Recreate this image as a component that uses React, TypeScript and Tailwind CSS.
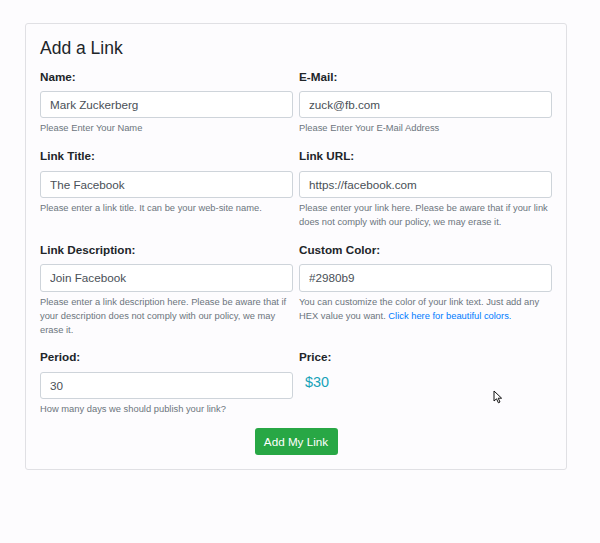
import React from "react";

type Field = {
  label: string;
  value: string;
  help: React.ReactNode;
};

const rows: Field[][] = [
  [
    { label: "Name:", value: "Mark Zuckerberg", help: "Please Enter Your Name" },
    { label: "E-Mail:", value: "zuck@fb.com", help: "Please Enter Your E-Mail Address" },
  ],
  [
    {
      label: "Link Title:",
      value: "The Facebook",
      help: "Please enter a link title. It can be your web-site name.",
    },
    {
      label: "Link URL:",
      value: "https://facebook.com",
      help: "Please enter your link here. Please be aware that if your link does not comply with our policy, we may erase it.",
    },
  ],
  [
    {
      label: "Link Description:",
      value: "Join Facebook",
      help: "Please enter a link description here. Please be aware that if your description does not comply with our policy, we may erase it.",
    },
    {
      label: "Custom Color:",
      value: "#2980b9",
      help: (
        <>
          You can customize the color of your link text. Just add any HEX value you want.{" "}
          <a href="#" className="text-[#007bff]">
            Click here for beautiful colors.
          </a>
        </>
      ),
    },
  ],
];

function FormGroup({ field }: { field: Field }) {
  return (
    <div className="flex flex-col mb-[11.7px]">
      <label className="text-[11.7px] leading-[17px] font-bold text-[#212529] mb-[6.6px]">
        {field.label}
      </label>
      <input
        readOnly
        value={field.value}
        className="h-[27.3px] w-full px-[9px] text-[11.7px] text-[#495057] bg-white border border-[#ced4da] rounded-[3px] outline-none"
      />
      <p className="mt-[3px] text-[9.35px] leading-[14px] text-[#6c757d]">{field.help}</p>
    </div>
  );
}

// little mouse pointer hovering over the form
function Pointer() {
  return (
    <svg
      className="absolute left-[493px] top-[390px]"
      width="10"
      height="14"
      viewBox="0 0 10 14"
    >
      <path
        d="M1 1 L1 11 L3.5 8.8 L5.4 12.8 L7 12 L5.2 8.2 L8.6 8.2 Z"
        fill="#fff"
        stroke="#111"
        strokeWidth="1"
        strokeLinejoin="round"
      />
    </svg>
  );
}

export default function App() {
  return (
    <div
      className="relative min-h-[543px] w-full bg-[#fdfcfe] pt-[23px] px-[25px]"
      style={{ fontFamily: '"Liberation Sans", Arial, sans-serif' }}
    >
      <div className="w-[542px] h-[447px] border border-[#e0e0e4] rounded-[3px] pt-[14px] px-[14px]">
        <h4 className="text-[17.5px] leading-[21px] text-[#212529] mb-[8.5px]">Add a Link</h4>

        {rows.map((row, i) => (
          <div key={i} className="grid grid-cols-2 gap-x-[6px]">
            {row.map((f) => (
              <FormGroup key={f.label} field={f} />
            ))}
          </div>
        ))}

        <div className="grid grid-cols-2 gap-x-[6px]">
          <FormGroup
            field={{ label: "Period:", value: "30", help: "How many days we should publish your link?" }}
          />
          <div className="flex flex-col">
            <label className="text-[11.7px] leading-[17px] font-bold text-[#212529]">Price:</label>
            <span className="mt-[9px] pl-[6px] text-[14.4px] leading-[17px] text-[#17a2b8]">$30</span>
          </div>
        </div>

        <div className="flex justify-center mt-[0.5px]">
          <button className="w-[83px] h-[27px] rounded-[3px] bg-[#28a745] text-white text-[11.7px]">
            Add My Link
          </button>
        </div>
      </div>
      <Pointer />
    </div>
  );
}
